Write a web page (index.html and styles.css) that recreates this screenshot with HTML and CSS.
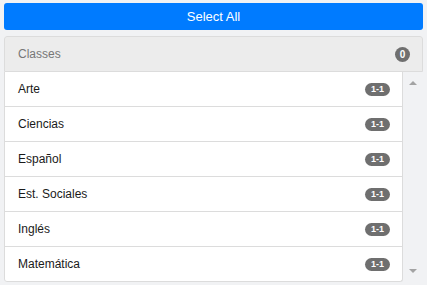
FILE: index.html
```html
<!DOCTYPE html>
<html lang="en">

<head>
    <meta charset="UTF-8">
    <meta name="viewport" content="width=device-width, initial-scale=1.0">
    <title>Classes</title>
    <link rel="stylesheet" href="styles.css">
</head>

<body>
    <div class="wrapper">
        <button class="select-all">Select All</button>
        <div class="panel">
            <div class="panel-heading">
                <span>Classes</span>
                <span class="badge round">0</span>
            </div>
            <div class="panel-body">
                <ul class="list">
                    <li>Arte <span class="badge">1-1</span></li>
                    <li>Ciencias <span class="badge">1-1</span></li>
                    <li>Español <span class="badge">1-1</span></li>
                    <li>Est. Sociales <span class="badge">1-1</span></li>
                    <li>Inglés <span class="badge">1-1</span></li>
                    <li>Matemática <span class="badge">1-1</span></li>
                </ul>
                <div class="gutter">
                    <span class="arrow up"></span>
                    <span class="arrow down"></span>
                </div>
            </div>
        </div>
    </div>
</body>

</html>
```

FILE: styles.css
```css
body {
    margin: 0;
    background-color: #f1f2f4;
    font-family: "Liberation Sans", Arial, sans-serif;
}

.wrapper {
    padding: 3px 4px;
    display: flex;
    flex-direction: column;
    gap: 6px;
}

.select-all {
    height: 27px;
    width: 100%;
    border: none;
    border-radius: 3px;
    background-color: #007bff;
    color: white;
    font-family: inherit;
    font-size: 13px;
}

.panel {
    border-radius: 3px;
    overflow: hidden;
}

.panel-heading {
    height: 34px;
    display: flex;
    justify-content: space-between;
    align-items: center;
    padding: 0 12px 0 13px;
    background-color: #ececec;
    border: 1px solid #dcdcdc;
    border-radius: 3px 3px 0 0;
    color: #777;
    font-size: 12px;
}

.panel-body {
    display: flex;
}

.list {
    margin: 0;
    padding: 0;
    list-style: none;
    width: 397px;
    background-color: white;
    border: 1px solid #dcdcdc;
    border-top: none;
    border-radius: 0 0 3px 3px;
}

.list li {
    height: 34px;
    display: flex;
    justify-content: space-between;
    align-items: center;
    padding: 0 12px 0 13px;
    border-bottom: 1px solid #dcdcdc;
    color: #1a1a1a;
    font-size: 12px;
}

.list li:last-child {
    border-bottom: none;
}

.badge {
    background-color: #6f6f6f;
    color: white;
    font-size: 9px;
    font-weight: bold;
    height: 13px;
    line-height: 13px;
    padding: 0 6px;
    border-radius: 7px;
}

.badge.round {
    width: 15px;
    height: 15px;
    line-height: 15px;
    padding: 0;
    text-align: center;
    border-radius: 50%;
    font-size: 10px;
}

.gutter {
    width: 20px;
    display: flex;
    flex-direction: column;
    justify-content: space-between;
    align-items: center;
    padding: 9px 0 9px;
}

.arrow {
    width: 0;
    height: 0;
    border-left: 4px solid transparent;
    border-right: 4px solid transparent;
}

.arrow.up {
    border-bottom: 4px solid #a3a3a3;
}

.arrow.down {
    border-top: 4px solid #a3a3a3;
}
```
